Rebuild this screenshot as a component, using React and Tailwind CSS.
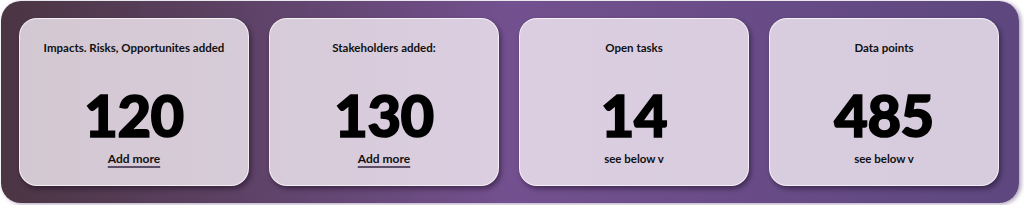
import React from 'react';

const stats = [
  { title: 'Impacts. Risks, Opportunites added', value: '120', action: 'Add more', link: true },
  { title: 'Stakeholders added:', value: '130', action: 'Add more', link: true },
  { title: 'Open tasks', value: '14', action: 'see below v', link: false },
  { title: 'Data points', value: '485', action: 'see below v', link: false },
];

const StatCard = ({ title, value, action, link }) => (
  <div className="w-[230px] h-[168px] shrink-0 rounded-[18px] border border-white/70 bg-[#f5eef5]/80 shadow-[2px_3px_5px_rgba(20,5,25,0.45)] flex flex-col items-center pt-[22px] text-black">
    <div className="text-[11.5px] leading-[14px] font-bold text-[#111]">{title}</div>
    <div className="mt-[31px] text-[58px] leading-[58px] font-black tracking-[-0.5px] [-webkit-text-stroke:1.6px_#000]">
      {value}
    </div>
    {link ? (
      <a
        href="#"
        className="mt-[7px] text-[12px] leading-[16px] font-bold text-[#111] underline decoration-[1.5px] underline-offset-[3px] decoration-[#5a4f66]"
      >
        {action}
      </a>
    ) : (
      <div className="mt-[7px] text-[11.5px] leading-[16px] font-bold text-[#111]">{action}</div>
    )}
  </div>
);

const App = () => {
  return (
    <div className="w-[1024px] h-[205px] bg-white p-px" style={{ fontFamily: 'Lato, "Noto Sans", sans-serif' }}>
      <div className="w-[1018px] h-[202px] rounded-[20px] bg-gradient-to-r from-[#4b3543] via-[#73508f] to-[#5d477e] shadow-[2px_1px_4px_rgba(90,60,120,0.5)] flex gap-[20px] pl-[18px] pt-[17px]">
        {stats.map((s) => (
          <StatCard key={s.title} {...s} />
        ))}
      </div>
    </div>
  );
};

export default App;
